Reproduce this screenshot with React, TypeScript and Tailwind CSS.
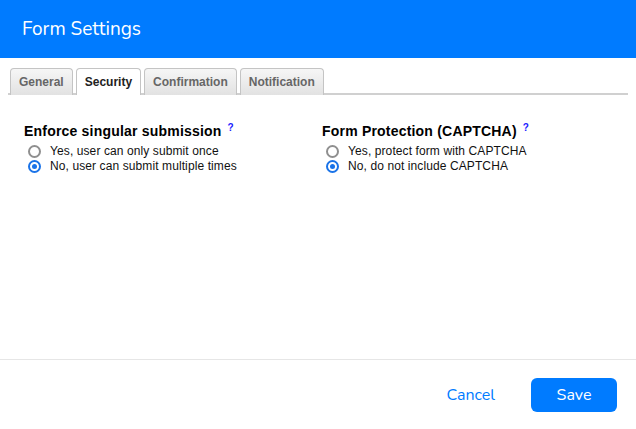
import React from "react"

const tabs = ["General", "Security", "Confirmation", "Notification"]

function Radio({ checked, label }: { checked: boolean; label: string }) {
  return (
    <label className="flex items-center gap-[9px] h-[15px]">
      {checked ? (
        <span className="flex size-[13px] items-center justify-center rounded-full border-2 border-[#1a73e8]">
          <span className="size-[5px] rounded-full bg-[#1a73e8]" />
        </span>
      ) : (
        <span className="size-[13px] rounded-full border-2 border-[#8f8f8f]" />
      )}
      <span className="text-[12px] leading-[15px] tracking-[0.1px] text-[#111]">{label}</span>
    </label>
  )
}

function Group({ title, options, selected }: { title: string; options: string[]; selected: number }) {
  return (
    <div className="flex flex-col">
      <div className="flex items-start text-[14px] font-bold leading-[17px] tracking-[0.2px] text-black">
        {title}
        <span className="ml-[6px] -mt-[4px] text-[10px] font-bold text-[#1a1aff]">?</span>
      </div>
      <div className="ml-[4px] mt-[4px] flex flex-col">
        {options.map((o, i) => (
          <Radio key={o} label={o} checked={i === selected} />
        ))}
      </div>
    </div>
  )
}

export default function App() {
  return (
    <div className="flex h-[429px] w-[636px] flex-col bg-white">
      <header
        className="flex h-[58px] shrink-0 items-center bg-[#007bff] px-[22px] text-[19px] text-white"
        style={{ fontFamily: "Nunito, 'Noto Sans', sans-serif" }}
      >
        Form Settings
      </header>

      <div className="flex-1" style={{ fontFamily: "'Liberation Sans', Arial, sans-serif" }}>
        <div className="mx-[8px] mt-[10px] flex items-end gap-[3px] border-b-2 border-[#d0d0d0] pl-[2px]">
          {tabs.map((t) => {
            const active = t === "Security"
            return (
              <div
                key={t}
                className={
                  active
                    ? "-mb-[2px] flex h-[27px] items-center rounded-t-[4px] border border-b-0 border-[#c4c4c4] bg-white px-[8px] text-[12px] font-bold text-[#222]"
                    : "-mb-[2px] flex h-[27px] items-center rounded-t-[4px] border border-b-0 border-[#c4c4c4] bg-gradient-to-b from-[#f6f6f6] to-[#e2e2e2] px-[8px] text-[12px] font-bold text-[#666]"
                }
              >
                {t}
              </div>
            )
          })}
        </div>

        <div className="mt-[28px] grid grid-cols-[298px_1fr] pl-[24px]">
          <Group
            title="Enforce singular submission"
            options={["Yes, user can only submit once", "No, user can submit multiple times"]}
            selected={1}
          />
          <Group
            title="Form Protection (CAPTCHA)"
            options={["Yes, protect form with CAPTCHA", "No, do not include CAPTCHA"]}
            selected={1}
          />
        </div>
      </div>

      <footer
        className="flex h-[70px] shrink-0 items-center justify-end gap-[36px] border-t border-[#e6e6e6] pr-[19px]"
        style={{ fontFamily: "Nunito, 'Noto Sans', sans-serif" }}
      >
        <button className="text-[16px] text-[#007bff]">Cancel</button>
        <button className="h-[34px] w-[86px] rounded-[6px] bg-[#007bff] text-[16px] text-white">Save</button>
      </footer>
    </div>
  )
}
